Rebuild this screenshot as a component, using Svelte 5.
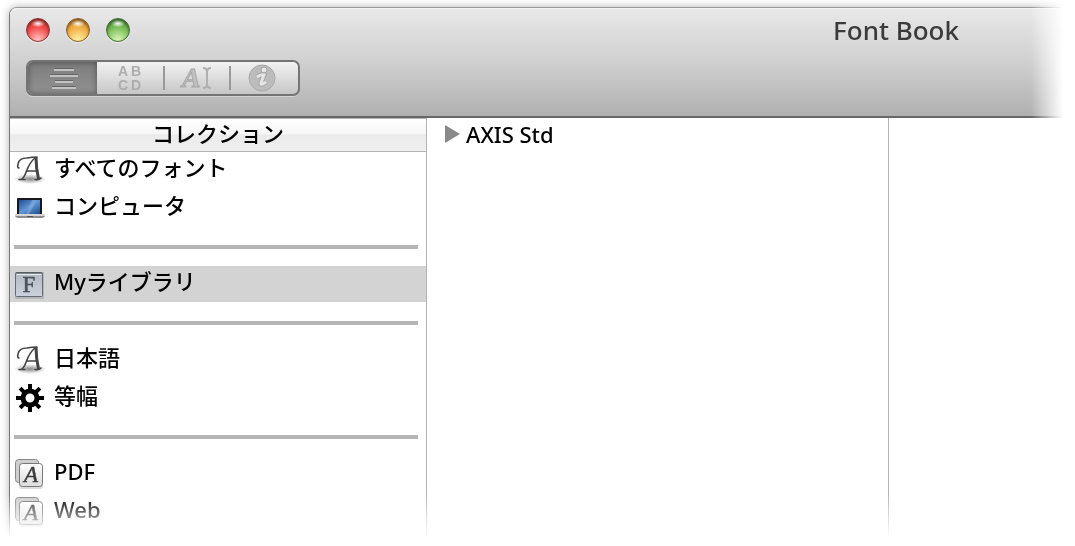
<script lang="ts">
	type Icon = 'script' | 'laptop' | 'library' | 'gear' | 'stack';

	const groups: { name: string; icon: Icon }[][] = [
		[
			{ name: 'すべてのフォント', icon: 'script' },
			{ name: 'コンピュータ', icon: 'laptop' }
		],
		[{ name: 'Myライブラリ', icon: 'library' }],
		[
			{ name: '日本語', icon: 'script' },
			{ name: '等幅', icon: 'gear' }
		],
		[
			{ name: 'PDF', icon: 'stack' },
			{ name: 'Web', icon: 'stack' }
		]
	];

	const lights = ['close', 'minimize', 'zoom'];
	const views = ['list', 'grid', 'custom', 'info'];
	const teeth = [0, 45, 90, 135, 180, 225, 270, 315];

	let view = $state('list');
	let selected = $state('Myライブラリ');
	let open = $state(false);
</script>

<div class="desktop">
	<div class="window">
		<header>
			<div class="titlebar">
				<div class="lights">
					{#each lights as light}
						<button class="light {light}" aria-label={light}></button>
					{/each}
				</div>
				<h1>Font Book</h1>
			</div>

			<div class="segments">
				{#each views as v}
					<button class="segment" class:active={view === v} aria-label={v} onclick={() => (view = v)}>
						<svg width="36" height="32" viewBox="0 0 36 32">
							{#if v === 'list'}
								<path d="M9 6h20v1H9zM5 12h28v1H5zM10 18h18v1H10zM7 24h24v1H7z" fill="#666" />
								<path d="M9 7h20v2H9zM5 13h28v2H5zM10 19h18v2H10zM7 25h24v2H7z" fill="#c2c2c2" />
							{:else if v === 'grid'}
								<g class="caps" fill="#adadad">
									<text x="6" y="14">A</text>
									<text x="19" y="14">B</text>
									<text x="6" y="28">C</text>
									<text x="19" y="28">D</text>
								</g>
							{:else if v === 'custom'}
								<text class="slant" x="4" y="25" fill="#c0c0c0" stroke="#a8a8a8">A</text>
								<path d="M25 6q4 0 4 4v12q0 4-4 4M33 6q-4 0-4 4v12q0 4 4 4" fill="none" stroke="#b0b0b0" stroke-width="2" />
							{:else}
								<circle cx="18" cy="16" r="13" fill="#bcbcbc" stroke="#a9a9a9" />
								<circle cx="20" cy="8" r="3" fill="#e5e5e5" stroke="#a6a6a6" />
								<path d="M13 15q4-3 7-2l-3 8q-1 3 5-1" fill="none" stroke="#a6a6a6" stroke-width="5" />
								<path d="M13 15q4-3 7-2l-3 8q-1 3 5-1" fill="none" stroke="#e5e5e5" stroke-width="3" />
							{/if}
						</svg>
					</button>
				{/each}
			</div>
		</header>

		<main>
			<nav>
				<h2>コレクション</h2>
				{#each groups as group, i}
					{#if i > 0}
						<div class="divider"><hr /></div>
					{/if}
					{#each group as item}
						<button class="row" class:selected={selected === item.name} onclick={() => (selected = item.name)}>
							{@render icon(item.icon)}
							<span>{item.name}</span>
						</button>
					{/each}
				{/each}
			</nav>

			<section class="fonts">
				<button class="font" aria-expanded={open} onclick={() => (open = !open)}>
					<svg class:open width="15" height="18" viewBox="0 0 15 18">
						<path d="M0 0l15 9-15 9z" fill="#898989" />
					</svg>
					<span>AXIS Std</span>
				</button>
			</section>

			<section class="preview"></section>
		</main>
	</div>
</div>

{#snippet icon(name: Icon)}
	<svg class="icon" width="32" height="32" viewBox="0 0 32 32">
		{#if name === 'script'}
			<defs>
				<radialGradient id="ground">
					<stop offset="0" stop-color="#666" stop-opacity=".8" />
					<stop offset="1" stop-color="#777" stop-opacity="0" />
				</radialGradient>
			</defs>
			<ellipse cx="16" cy="25" rx="16" ry="5" fill="url(#ground)" />
			<g fill="none" stroke="#444" stroke-linecap="round">
				<path d="M5 14Q3 14 4 10Q5 4 13 4Q18 3 23 3" stroke-width="1.6" />
				<path d="M21 4Q16 8 12.500 17Q10.500 23 8 25" stroke-width="1.6" />
				<path d="M22 3Q22 14 24.500 25" stroke-width="3" stroke-linecap="butt" />
				<path d="M13 17h9" stroke-width="1.500" />
				<path d="M5 25.500h6M21 25.500Q25 26 27 24" stroke-width="1.600" />
			</g>
		{:else if name === 'laptop'}
			<defs>
				<linearGradient id="screen" x1="0" y1="0" x2="1" y2="1">
					<stop offset="0" stop-color="#1b4c97" />
					<stop offset=".5" stop-color="#6296d2" />
					<stop offset="1" stop-color="#1d4a90" />
				</linearGradient>
			</defs>
			<rect x="3" y="6" width="25" height="18" rx="1" fill="#17181d" />
			<path d="M5 8h21v14H5z" fill="url(#screen)" />
			<path d="M18 8h5l-8 14h-3z" fill="#9cc0e8" opacity=".4" />
			<path d="M1 23h30v1q-1 2-3 2H4q-2 0-3-2z" fill="#8d8d8d" />
			<path d="M1 22h30v2H1z" fill="#d4d4d4" />
			<path d="M13 24h6v1h-6z" fill="#555" />
		{:else if name === 'library'}
			<defs>
				<linearGradient id="slate" x1="0" y1="0" x2="0" y2="1">
					<stop offset="0" stop-color="#b2b9c3" />
					<stop offset="1" stop-color="#cbd2dd" />
				</linearGradient>
			</defs>
			<rect x="1" y="4" width="29" height="27" rx="1" fill="#999" opacity=".5" />
			<rect x="1.500" y="4.500" width="27" height="24" rx="1" fill="url(#slate)" stroke="#656b73" />
			<path d="M2 5h26" stroke="#4d5259" />
			<path d="M3 6.500h24" stroke="#e4e9ef" />
			<text class="serif" x="15" y="24" text-anchor="middle" fill="#4c5159" stroke="#4c5159">F</text>
		{:else if name === 'gear'}
			{#each teeth as angle}
				<rect x="14" y="2" width="4" height="7" transform="rotate({angle} 16 16)" />
			{/each}
			<circle cx="16" cy="16" r="7" fill="none" stroke="#000" stroke-width="5" />
		{:else}
			<defs>
				<linearGradient id="paper" x1="0" y1="0" x2="0" y2="1">
					<stop offset="0" stop-color="#fff" />
					<stop offset="1" stop-color="#ddd" />
				</linearGradient>
			</defs>
			<rect x="1.500" y="1.500" width="23" height="23" rx="3" fill="#cfcfcf" stroke="#8a8a8a" />
			<rect x="5" y="7" width="24" height="24" rx="3" fill="#bbb" opacity=".5" />
			<rect x="5.500" y="5.500" width="23" height="23" rx="3" fill="url(#paper)" stroke="#777" />
			<text class="serif italic" x="17" y="24" text-anchor="middle" fill="#3c3c3c" stroke="#3c3c3c">A</text>
		{/if}
	</svg>
{/snippet}

<style>
	:global(body) {
		margin: 0;
		background: #fff;
	}

	.desktop {
		box-sizing: border-box;
		height: 100vh;
		padding: 7px 0 0 9px;
		overflow: hidden;
		font-family: "Noto Sans", "Noto Sans CJK JP", sans-serif;
		font-weight: 500;
		color: #000;
		-webkit-mask-image: linear-gradient(to top, transparent 8px, #000 52px), linear-gradient(to left, transparent 12px, #000 44px);
		-webkit-mask-composite: source-in;
		mask-image: linear-gradient(to top, transparent 8px, #000 52px), linear-gradient(to left, transparent 12px, #000 44px);
		mask-composite: intersect;
	}

	.window {
		display: flex;
		flex-direction: column;
		box-sizing: border-box;
		height: 100%;
		border: solid #777;
		border-width: 1px 0 0 1px;
		border-top-color: #999;
		border-radius: 8px 0 0 0;
		background: #fff;
		box-shadow: 0 0 9px rgba(0, 0, 0, 0.3);
	}

	button {
		margin: 0;
		padding: 0;
		border: 0;
		background: none;
		font: inherit;
		color: inherit;
	}

	header {
		box-sizing: border-box;
		height: 110px;
		padding: 0 16px;
		border-bottom: 2px solid #676767;
		border-radius: 7px 0 0 0;
		background: linear-gradient(#e9e9e9, #d0d0d0 50%, #b0b0b0);
		box-shadow: inset 0 1px #f4f4f4;
	}

	.titlebar {
		display: flex;
		align-items: center;
		justify-content: space-between;
		height: 44px;
		margin-bottom: 8px;
	}

	.lights {
		display: flex;
		gap: 16px;
	}

	.light {
		box-sizing: border-box;
		width: 24px;
		height: 24px;
		border: 1px solid;
		border-radius: 50%;
		box-shadow: inset 0 2px 3px rgba(0, 0, 0, 0.4), 0 1px #eee;
	}

	.close {
		border-color: #8f3430;
		background: radial-gradient(ellipse 7px 4px at 50% 20%, #fff, transparent), radial-gradient(circle at 50% 95%, #ffc9c6, #f34a49 55%, #c52e2e);
	}

	.minimize {
		border-color: #915e20;
		background: radial-gradient(ellipse 7px 4px at 50% 20%, #fff, transparent), radial-gradient(circle at 50% 95%, #fff0a6, #f1ae42 55%, #bd7625);
	}

	.zoom {
		border-color: #3f7130;
		background: radial-gradient(ellipse 7px 4px at 50% 20%, #fff, transparent), radial-gradient(circle at 50% 95%, #d9f7b4, #79bd58 55%, #46883a);
	}

	h1 {
		margin: 0 100px 0 0;
		font-size: 26px;
		font-weight: 500;
		line-height: 36px;
		color: #3b3b3b;
	}

	.segments {
		display: flex;
		box-sizing: border-box;
		width: 274px;
		height: 36px;
		border: 2px solid #747474;
		border-radius: 7px;
		background: linear-gradient(#f2f2f2, #c6c6c6);
		box-shadow: 0 1px #d4d4d4;
		overflow: hidden;
	}

	.segment {
		display: flex;
		flex: 0 0 66px;
		align-items: center;
		justify-content: center;
	}

	.segment:first-child {
		flex-basis: 69px;
	}

	.segment + .segment + .segment {
		background: linear-gradient(#999, #999) left center / 2px 24px no-repeat;
	}

	.segment.active {
		background: linear-gradient(#7d7d7d, #929292);
		box-shadow: inset 0 0 6px rgba(0, 0, 0, 0.4);
	}

	.caps {
		font: 700 14px "Liberation Sans", sans-serif;
	}

	.slant {
		font: italic 700 28px "Liberation Serif", serif;
	}

	main {
		display: grid;
		grid-template-columns: 417px 462px 1fr;
		flex: 1;
		min-height: 0;
		font-size: 22px;
	}

	nav,
	.fonts {
		box-sizing: border-box;
		border-right: 1px solid #b4b4b4;
	}

	h2 {
		box-sizing: border-box;
		height: 34px;
		margin: 0;
		border: solid #b4b4b4;
		border-width: 1px 0;
		background: linear-gradient(#fff, #f7f7f7 45%, #ebebeb 50%, #efefef);
		font-size: 22px;
		font-weight: 500;
		line-height: 28px;
		text-align: center;
	}

	.row {
		display: flex;
		align-items: center;
		gap: 8px;
		width: 100%;
		height: 36px;
		margin-bottom: 2px;
		padding-left: 4px;
		text-align: left;
		white-space: nowrap;
	}

	.row span {
		height: 36px;
		line-height: 30px;
	}

	.row.selected {
		background: #d3d3d3;
	}

	.icon {
		flex: none;
	}

	.serif {
		font: 23px "Liberation Serif", serif;
		stroke-width: 0.5;
	}

	.italic {
		font-style: italic;
	}

	.divider {
		display: flex;
		align-items: center;
		height: 38px;
		padding: 0 8px 0 4px;
	}

	hr {
		flex: 1;
		height: 4px;
		margin: 0;
		border: 0;
		background: #b5b5b5;
	}

	.font {
		display: flex;
		align-items: center;
		gap: 6px;
		height: 32px;
		padding-left: 18px;
		line-height: 30px;
	}

	.open {
		transform: rotate(90deg);
	}
</style>
